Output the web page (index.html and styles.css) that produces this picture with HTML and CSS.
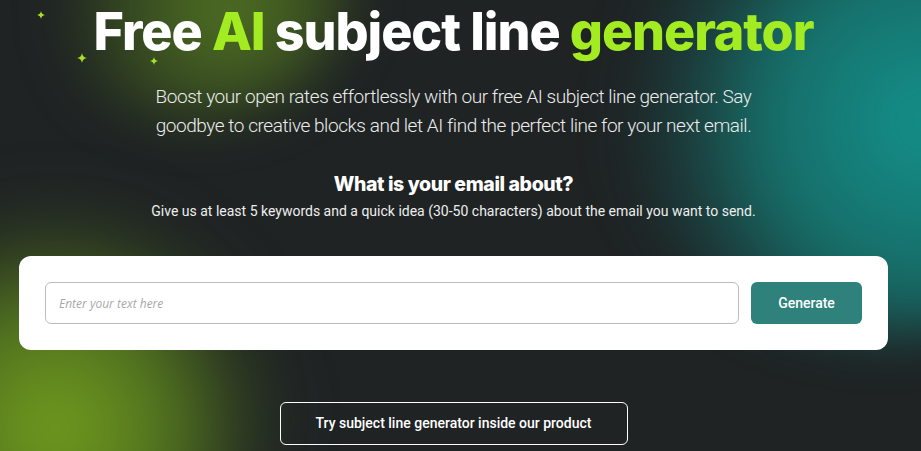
FILE: index.html
```html
<!DOCTYPE html>
<html>
<head>
<meta charset="UTF-8">
<title>Free AI subject line generator</title>
<link rel="stylesheet" href="styles.css">
</head>
<body>
<div class="backdrop">
  <div class="glow glow-top"></div>
  <div class="glow glow-bottom"></div>
  <div class="glow glow-teal"></div>

  <svg class="spark s1" viewBox="0 0 10 10"><path d="M5 0 Q5.6 4.4 10 5 Q5.6 5.6 5 10 Q4.4 5.6 0 5 Q4.4 4.4 5 0Z"/></svg>
  <svg class="spark s2" viewBox="0 0 10 10"><path d="M5 0 Q5.6 4.4 10 5 Q5.6 5.6 5 10 Q4.4 5.6 0 5 Q4.4 4.4 5 0Z"/></svg>
  <svg class="spark s3" viewBox="0 0 10 10"><path d="M5 0 Q5.6 4.4 10 5 Q5.6 5.6 5 10 Q4.4 5.6 0 5 Q4.4 4.4 5 0Z"/></svg>
</div>

<div class="page">
  <h1 class="title">Free <span class="lime">AI</span> subject line <span class="lime">generator</span></h1>
  <p class="lead">Boost your open rates effortlessly with our free AI subject line generator. Say goodbye to creative blocks and let AI find the perfect line for your next email.</p>

  <h2 class="ask">What is your email about?</h2>
  <p class="hint">Give us at least 5 keywords and a quick idea (30-50 characters) about the email you want to send.</p>

  <form class="card">
    <input class="field" type="text" placeholder="Enter your text here">
    <button class="btn-generate" type="button">Generate</button>
  </form>

  <div class="cta-row">
    <a class="cta" href="#">Try subject line generator inside our product</a>
  </div>
</div>
</body>
</html>
```

FILE: styles.css
```css
* {
  margin: 0;
  padding: 0;
  box-sizing: border-box;
}

html, body {
  height: 100%;
}

body {
  position: relative;
  overflow: hidden;
  background: #1f2324;
  font-family: Roboto, "Liberation Sans", sans-serif;
  color: #fff;
}

/* soft colour blobs behind the content */
.backdrop {
  position: absolute;
  inset: 0;
  overflow: hidden;
  z-index: 0;
}

.glow {
  position: absolute;
  border-radius: 50%;
}

.glow-top {
  left: 30px;
  top: -130px;
  width: 320px;
  height: 250px;
  filter: blur(26px);
  background: radial-gradient(circle at 62% 55%, rgba(90, 130, 35, 0.85) 0%, rgba(70, 100, 30, 0.55) 45%, rgba(31, 35, 36, 0) 72%);
}

.glow-bottom {
  left: -180px;
  top: 190px;
  width: 470px;
  height: 410px;
  filter: blur(28px);
  background: radial-gradient(circle at 50% 58%, rgba(115, 160, 30, 1) 0%, rgba(96, 138, 30, 0.75) 35%, rgba(60, 82, 30, 0.35) 58%, rgba(31, 35, 36, 0) 72%);
}

.glow-teal {
  left: 600px;
  top: -180px;
  width: 560px;
  height: 520px;
  filter: blur(24px);
  background: radial-gradient(circle at 58% 58%, rgba(20, 145, 140, 1) 0%, rgba(22, 118, 112, 0.9) 35%, rgba(25, 82, 80, 0.5) 55%, rgba(31, 35, 36, 0) 70%);
}

.spark {
  position: absolute;
  fill: #a6e22a;
}

.s1 { left: 37px; top: 11px; width: 8px; height: 8px; }
.s2 { left: 77px; top: 53px; width: 10px; height: 10px; }
.s3 { left: 150px; top: 57px; width: 8px; height: 8px; }

.page {
  position: relative;
  z-index: 1;
  width: 907px;
  padding: 0 19px;
  text-align: center;
}

.title {
  font-family: Inter, "Noto Sans", sans-serif;
  font-weight: 800;
  font-size: 52px;
  letter-spacing: -1.1px;
  line-height: 64px;
  color: #fff;
}

.lime {
  color: #a4ec22;
}

.lead {
  width: 620px;
  margin: 18px auto 0;
  font-weight: 300;
  font-size: 19px;
  letter-spacing: -0.45px;
  line-height: 29px;
  color: #ececec;
}

.ask {
  margin-top: 32px;
  font-family: Inter, "Noto Sans", sans-serif;
  font-weight: 800;
  font-size: 19.5px;
  letter-spacing: -0.4px;
  line-height: 25px;
}

.hint {
  margin-top: 5px;
  font-size: 14px;
  letter-spacing: 0;
  line-height: 18px;
  color: #eee;
}

.card {
  display: flex;
  align-items: center;
  gap: 12px;
  margin-top: 36px;
  padding: 26px;
  background: #fff;
  border-radius: 12px;
}

.field {
  flex: 1;
  height: 42px;
  padding: 0 13px;
  border: 1px solid #bcbcbc;
  border-radius: 6px;
  font-family: "Open Sans", sans-serif;
  font-size: 12px;
  font-style: italic;
  outline: none;
}

.field::placeholder {
  color: #a8a8a8;
}

.btn-generate {
  width: 111px;
  height: 42px;
  border: none;
  border-radius: 6px;
  background: #2e827b;
  color: #fff;
  font-family: Roboto, sans-serif;
  font-weight: 500;
  font-size: 14px;
}

.cta-row {
  display: flex;
  justify-content: center;
  margin-top: 52px;
}

.cta {
  display: block;
  width: 348px;
  height: 43px;
  line-height: 41px;
  border: 1px solid #fff;
  border-radius: 6px;
  color: #fff;
  text-decoration: none;
  font-weight: 500;
  font-size: 14px;
}
```
